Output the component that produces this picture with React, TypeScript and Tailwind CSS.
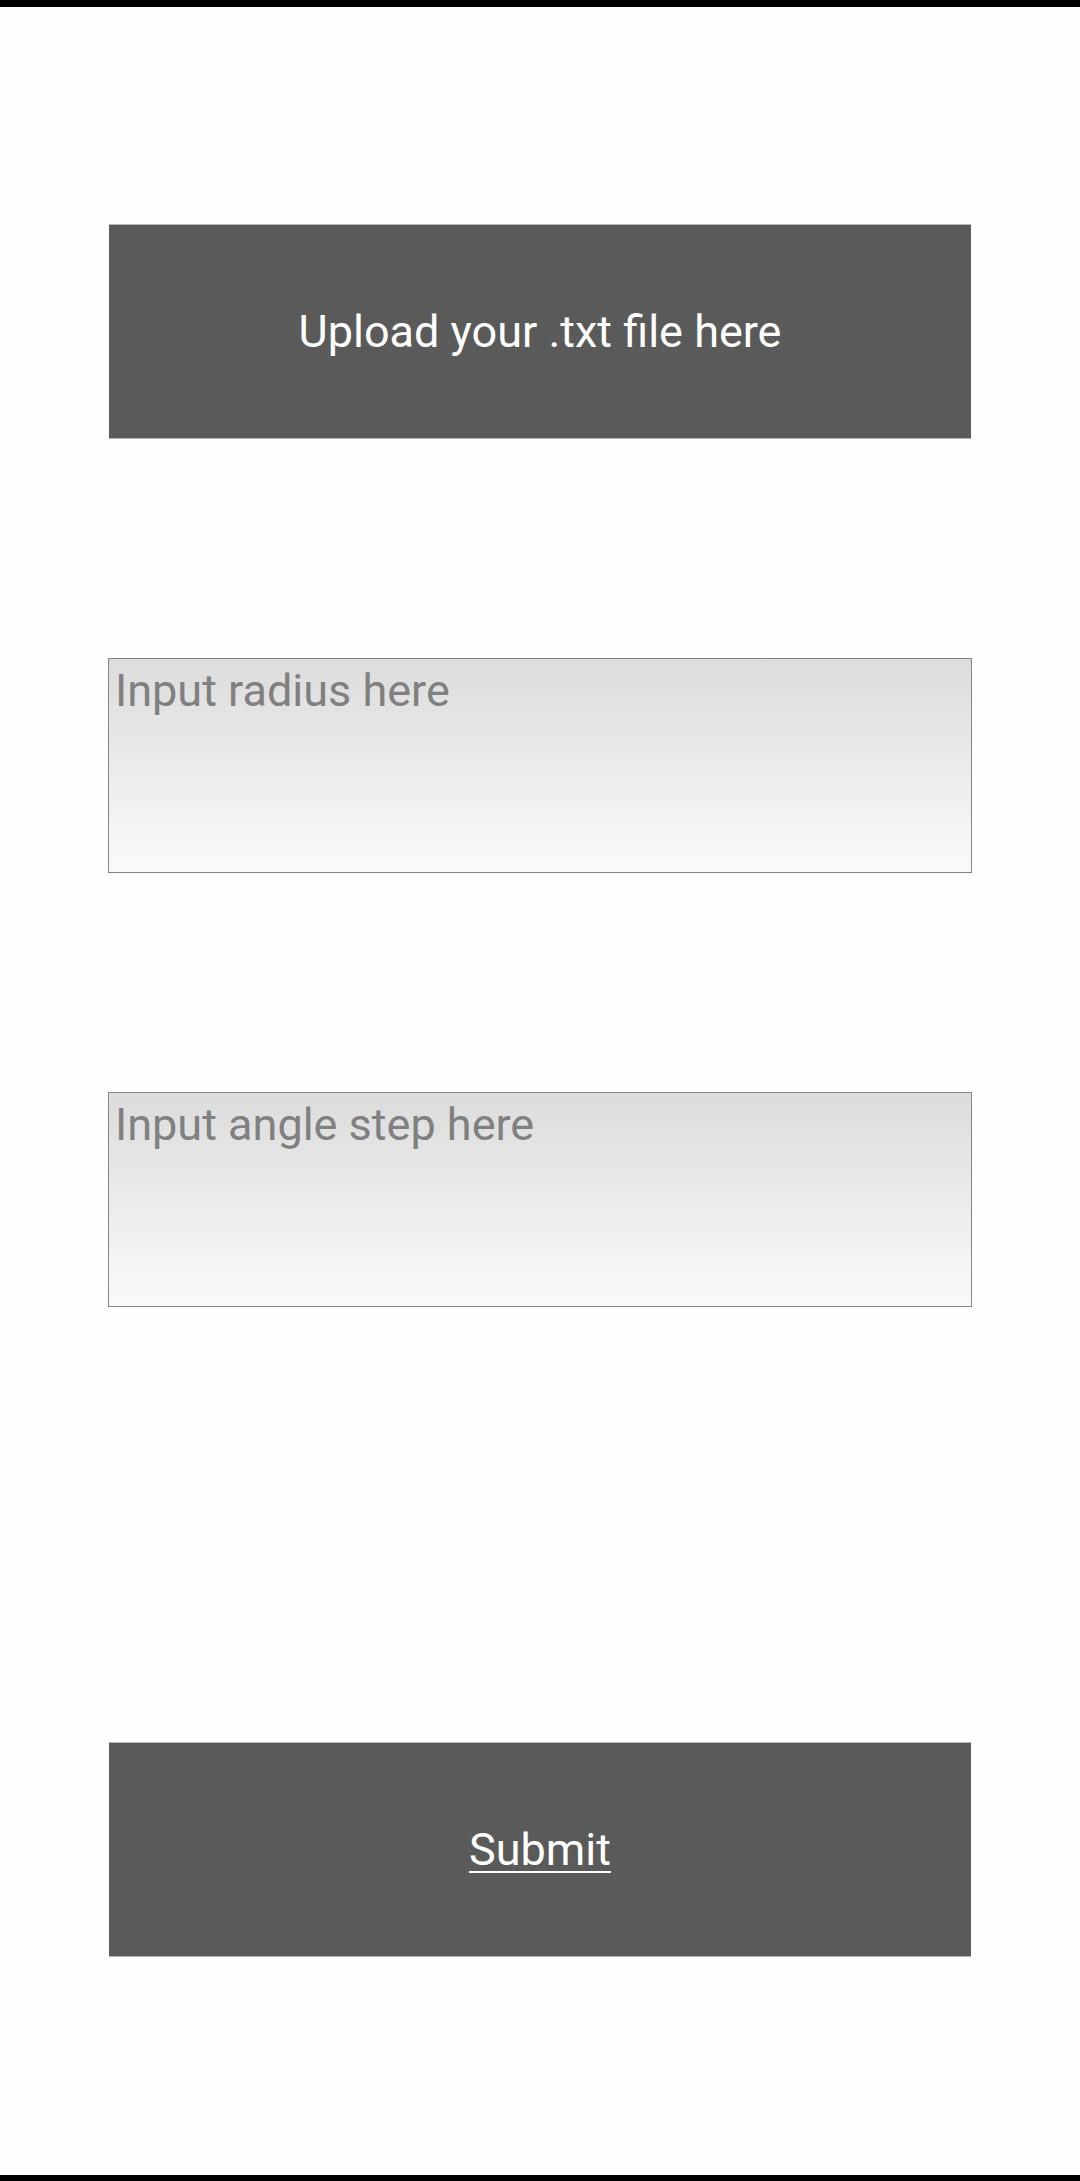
export default function App() {
  return (
    <div
      className="flex min-h-[2181px] flex-col border-t-[7px] border-b-[6px] border-black bg-[#fefefe] px-[108px]"
      style={{ fontFamily: 'Roboto, "Noto Sans", sans-serif' }}
    >
      {/* Upload */}
      <label className="mx-px mt-[217px] flex h-[215px] cursor-pointer items-center justify-center border-y border-[#b5b5b5] bg-[#5a5a5a] text-[45px] text-white">
        Upload your .txt file here
        <input type="file" accept=".txt" className="hidden" />
      </label>

      {/* Inputs */}
      <input
        type="text"
        placeholder="Input radius here"
        className="mt-[219px] block h-[215px] w-full border border-[#858585] bg-gradient-to-b from-[#dcdcdc] to-[#fafafa] px-[6px] pt-[5px] pb-[156px] text-[45px] leading-[52px] text-[#555] outline-none placeholder:text-[#808080]"
      />
      <input
        type="text"
        placeholder="Input angle step here"
        className="mt-[219px] block h-[215px] w-full border border-[#858585] bg-gradient-to-b from-[#dcdcdc] to-[#fafafa] px-[6px] pt-[5px] pb-[156px] text-[45px] leading-[52px] text-[#555] outline-none placeholder:text-[#808080]"
      />

      {/* Submit */}
      <button
        type="button"
        className="mx-px mt-[435px] flex h-[215px] items-center justify-center border-y border-[#b5b5b5] bg-[#5a5a5a] text-[45px] text-white underline decoration-2 underline-offset-[6px]"
      >
        Submit
      </button>
    </div>
  )
}
